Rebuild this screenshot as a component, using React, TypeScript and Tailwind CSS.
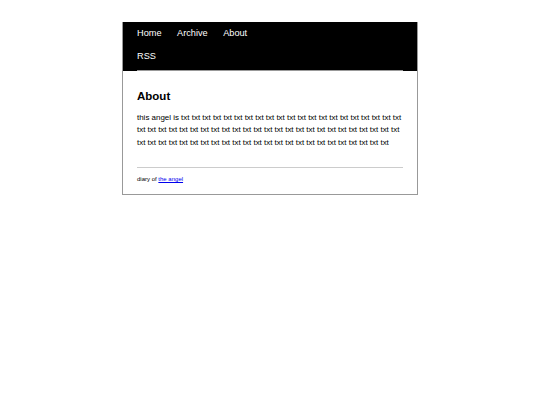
const nav = [["Home", "Archive", "About"], ["RSS"]]

const body = "this angel is " + Array(70).fill("txt").join(" ")

export default function App() {
  return (
    <div className="min-h-[405px] bg-white pt-[22px] font-['Liberation_Sans',Arial,sans-serif] text-black">
      <div className="mx-auto w-[296px] border border-[#999] border-t-0">
        <header className="bg-black px-[14px] pt-[1px]">
          <ul className="border-b border-[#999]">
            {nav.map((row, i) => (
              <li key={i} className="flex h-[22.4px] items-center gap-[15.5px] text-[9.2px] text-white">
                {row.map((item) => (
                  <a key={item} href="#">
                    {item}
                  </a>
                ))}
              </li>
            ))}
            <li className="h-[2.5px]" />
          </ul>
        </header>
        <main className="px-[14px] pt-[18px]">
          <h1 className="text-[11.5px] font-bold leading-[15px]">About</h1>
          <p className="mt-[7.5px] text-[7.95px] leading-[12.5px]">{body}</p>
          <hr className="mt-[18px] border-[#ccc]" />
          <footer className="pt-[7px] pb-[11px] text-[6px] leading-[8px]">
            diary of{" "}
            <a href="#" className="text-[#0000ee] underline">
              the angel
            </a>
          </footer>
        </main>
      </div>
    </div>
  )
}
